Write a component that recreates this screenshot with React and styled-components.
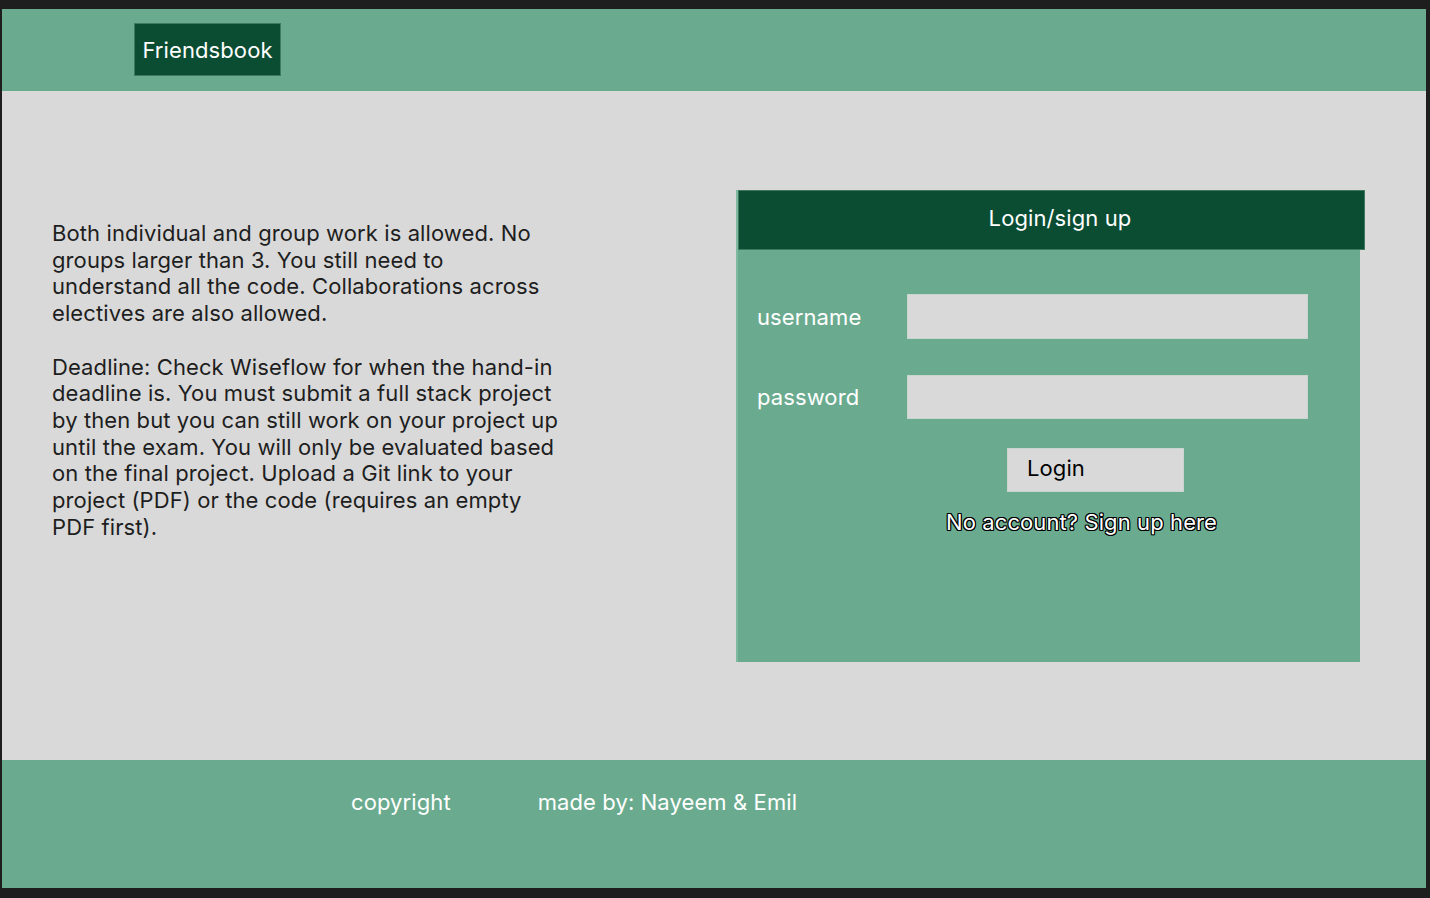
import styled, { createGlobalStyle } from 'styled-components';

const GlobalStyle = createGlobalStyle`
  html, body {
    margin: 0;
    padding: 0;
    background: #1e1e1e;
  }
  * {
    box-sizing: border-box;
  }
`;

const Frame = styled.div`
  margin: 9px 4px 10px 2px;
  height: 879px;
  display: flex;
  flex-direction: column;
  font-family: Inter, 'Liberation Sans', sans-serif;
  letter-spacing: 0.1px;
  background: #d9d9d9;
`;

const Header = styled.header`
  height: 82px;
  background: #6aab8f;
  display: flex;
  align-items: flex-start;
  padding: 14px 0 0 132px;
`;

const Brand = styled.div`
  width: 147px;
  height: 53px;
  background: #0b4d33;
  border: 1px solid #3f7a60;
  color: #ffffff;
  font-size: 22px;
  display: flex;
  align-items: center;
  justify-content: center;
  padding-top: 1px;
`;

const Main = styled.main`
  flex: 1;
  display: flex;
  justify-content: space-between;
  padding: 0 66px 0 50px;
`;

const Info = styled.div`
  width: 510px;
  padding-top: 129px;
  color: #1e1e1e;
  font-size: 22px;
  line-height: 26.7px;
`;

const Para = styled.p`
  margin: 0 0 26.7px;
`;

const Card = styled.section`
  margin-top: 99px;
  width: 624px;
  height: 472px;
  background: #6aab8f;
  border-left: 2px solid #7fbaa0;
  display: flex;
  flex-direction: column;
`;

const CardTitle = styled.div`
  height: 60px;
  margin-right: -5px;
  background: #0b4d33;
  border: 1px solid #3f7a60;
  color: #ffffff;
  font-size: 22px;
  display: flex;
  align-items: center;
  justify-content: center;
  padding: 0 0 4px 17px;
`;

const Form = styled.div`
  display: flex;
  flex-direction: column;
  padding-top: 44px;
`;

const Row = styled.label`
  display: flex;
  align-items: center;
  margin-bottom: ${(p) => p.$gap}px;
`;

const Label = styled.span`
  width: 169px;
  padding-left: 19px;
  color: #ffffff;
  font-size: 22px;
`;

const Input = styled.input`
  width: 401px;
  height: ${(p) => p.$h}px;
  background: #d9d9d9;
  border: 1px solid #c9d6cf;
  outline: none;
`;

const Button = styled.button`
  align-self: flex-start;
  margin-left: 269px;
  width: 177px;
  height: 44px;
  background: #d9d9d9;
  border: 1px solid #c9d6cf;
  color: #000000;
  font-family: Inter, 'Liberation Sans', sans-serif;
  font-size: 22px;
  letter-spacing: 0.1px;
  text-align: left;
  padding: 0 0 4px 19px;
`;

const SignUp = styled.a`
  align-self: flex-start;
  margin: 17px 0 0 208px;
  color: #ffffff;
  font-size: 22px;
  text-decoration: none;
  text-shadow:
    1px 0 0 #000, -1px 0 0 #000, 0 1px 0 #000, 0 -1px 0 #000,
    1px 1px 0 #000, -1px -1px 0 #000, 1px -1px 0 #000, -1px 1px 0 #000;
`;

const Footer = styled.footer`
  height: 128px;
  background: #6aab8f;
  display: flex;
  align-items: flex-start;
  padding: 29px 0 0 349px;
  gap: 87px;
  color: #ffffff;
  font-size: 22px;
`;

export default function App() {
  return (
    <>
      <GlobalStyle />
      <Frame>
        <Header>
          <Brand>Friendsbook</Brand>
        </Header>
        <Main>
          <Info>
            <Para>
              Both individual and group work is allowed. No groups larger than 3. You still
              need to understand all the code. Collaborations across electives are also
              allowed.
            </Para>
            <Para>
              Deadline: Check Wiseflow for when the hand-in deadline is. You must submit a
              full stack project by then but you can still work on your project up until the
              exam. You will only be evaluated based on the final project. Upload a Git link
              to your project (PDF) or the code (requires an empty PDF first).
            </Para>
          </Info>
          <Card>
            <CardTitle>Login/sign up</CardTitle>
            <Form>
              <Row $gap={36}>
                <Label>username</Label>
                <Input $h={45} type="text" />
              </Row>
              <Row $gap={29}>
                <Label>password</Label>
                <Input $h={44} type="password" />
              </Row>
              <Button>Login</Button>
              <SignUp href="#">No account? Sign up here</SignUp>
            </Form>
          </Card>
        </Main>
        <Footer>
          <span>copyright</span>
          <span>made by: Nayeem &amp; Emil</span>
        </Footer>
      </Frame>
    </>
  );
}
